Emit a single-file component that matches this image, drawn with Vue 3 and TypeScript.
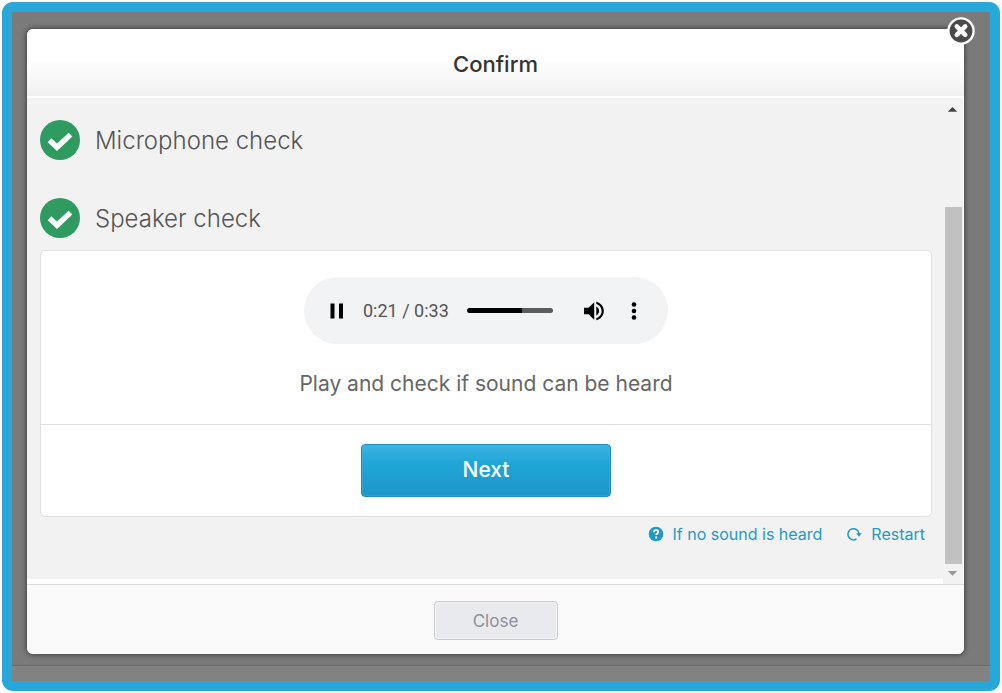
<script setup lang="ts">
import { computed, ref } from 'vue'

interface Check {
  id: string
  label: string
}

const checks: Check[] = [
  { id: 'microphone', label: 'Microphone check' },
  { id: 'speaker', label: 'Speaker check' },
]

const duration = 33
const elapsed = ref<number>(21)

const format = (seconds: number): string =>
  `${Math.floor(seconds / 60)}:${String(seconds % 60).padStart(2, '0')}`

const timeText = computed(() => `${format(elapsed.value)} / ${format(duration)}`)
const played = computed(() => `${(elapsed.value / duration) * 100}%`)
</script>

<template>
  <div class="frame">
    <section class="modal" role="dialog" aria-labelledby="dialog-title">
      <button class="dismiss" type="button" aria-label="Dismiss">
        <svg viewBox="0 0 28 28" aria-hidden="true">
          <circle cx="14" cy="14" r="12.6" fill="#4a4a4a" stroke="#fff" stroke-width="2.4" />
          <path d="M9.800 9.400 18.200 17.800M18.200 9.400 9.800 17.800" stroke="#fff" stroke-width="4.600" stroke-linecap="round" />
        </svg>
      </button>

      <header class="header">
        <h1 id="dialog-title">Confirm</h1>
      </header>

      <div class="body">
        <div class="content">
          <h2 v-for="check in checks" :key="check.id" class="check">
            <svg viewBox="0 0 40 40" aria-hidden="true">
              <circle cx="20" cy="20" r="20" fill="#2f9b60" />
              <path d="M9.500 20.200 17 27.200 30.500 14.600" fill="none" stroke="#fff" stroke-width="5.400" />
            </svg>
            <span>{{ check.label }}</span>
          </h2>

          <div class="card">
            <div class="listen">
              <div class="player">
                <button class="control" type="button" aria-label="Pause">
                  <svg viewBox="0 0 24 24" aria-hidden="true">
                    <path d="M5.5 4.5h4v15h-4zM14 4.5h4v15h-4z" />
                  </svg>
                </button>
                <span class="time">{{ timeText }}</span>
                <input
                  v-model.number="elapsed"
                  class="seek"
                  type="range"
                  min="0"
                  :max="duration"
                  aria-label="Playback position"
                  :style="{ '--played': played }"
                />
                <button class="control" type="button" aria-label="Mute">
                  <svg viewBox="0 0 24 24" aria-hidden="true">
                    <path
                      d="M2 8.7v6.6h4.5l5.7 5.5V3.2L6.5 8.7zM17.1 12c0-1.900-1.100-3.600-2.800-4.400v8.800c1.700-.8 2.800-2.500 2.800-4.400zM14.300 2.700v2.200c3.100.9 5.300 3.700 5.300 7.100s-2.200 6.200-5.300 7.100v2.200c4.300-1 7.500-4.700 7.500-9.300s-3.200-8.300-7.500-9.300z"
                    />
                  </svg>
                </button>
                <button class="control" type="button" aria-label="More options">
                  <svg viewBox="0 0 24 24" aria-hidden="true">
                    <circle cx="12" cy="5.500" r="2.300" />
                    <circle cx="12" cy="12" r="2.300" />
                    <circle cx="12" cy="18.500" r="2.300" />
                  </svg>
                </button>
              </div>
              <p class="hint">Play and check if sound can be heard</p>
            </div>
            <div class="actions">
              <button class="next" type="button">Next</button>
            </div>
          </div>

          <nav class="links">
            <a href="#help">
              <svg viewBox="0 0 16 16" aria-hidden="true">
                <circle cx="8" cy="8" r="7.300" fill="#1f9ac7" />
                <path
                  d="M5.900 6.300c0-1.500 1-2.200 2.200-2.200s2.200.7 2.200 1.900c0 1.500-2.100 1.500-2.100 3.100M8.200 10.500v1.900"
                  fill="none"
                  stroke="#fff"
                  stroke-width="1.800"
                />
              </svg>
              <span>If no sound is heard</span>
            </a>
            <a href="#restart">
              <svg viewBox="0 0 16 16" aria-hidden="true">
                <path d="M10.500 13A5.600 5.600 0 1 1 13.100 8" fill="none" stroke="#1f9ac7" stroke-width="1.500" />
                <path d="M10.200 7.300h5.600L13 10.800z" fill="#1f9ac7" />
              </svg>
              <span>Restart</span>
            </a>
          </nav>
        </div>

        <div class="scrollbar" aria-hidden="true">
          <svg class="arrow" viewBox="0 0 18 18"><path d="M4 12 9 7l5 5z" fill="#444" /></svg>
          <div class="track"><div class="thumb"></div></div>
          <svg class="arrow" viewBox="0 0 18 18"><path d="M4 7h10l-5 5z" fill="#999" /></svg>
        </div>
      </div>

      <footer class="footer">
        <button class="close" type="button">Close</button>
      </footer>
    </section>
    <div class="base"></div>
  </div>
</template>

<style>
html,
body {
  margin: 0;
  background: #fff;
}
</style>

<style scoped>
* {
  box-sizing: border-box;
}

.frame {
  display: flex;
  flex-direction: column;
  min-height: calc(100vh - 4px);
  margin: 2px;
  border: 10px solid #27a8d8;
  border-radius: 11px;
  background: #7a7a7a;
  font-family: Inter, "Liberation Sans", sans-serif;
  color: #555;
}

.modal {
  position: relative;
  display: flex;
  flex: 1;
  flex-direction: column;
  margin: 17px 26px 11px 15px;
  border-radius: 6px;
  background: #fff;
  box-shadow: 0 0 5px 1px #444;
}

.base {
  height: 16px;
  border-top: 1px solid #6c6c6c;
  background: #828282;
}

button {
  padding: 0;
  border: 0;
  background: none;
  font-family: inherit;
  cursor: pointer;
}

.dismiss {
  position: absolute;
  top: -12px;
  right: -11px;
  width: 28px;
  height: 28px;
}

svg {
  display: block;
  flex: none;
}

.header {
  display: flex;
  align-items: center;
  justify-content: center;
  height: 69px;
  border-bottom: 2px solid #fff;
  border-radius: 6px 6px 0 0;
  background: linear-gradient(#fff 45%, #f0f0f0);
}

h1 {
  margin: 3px 0 0;
  font-size: 22px;
  font-weight: 500;
  line-height: 28px;
  color: #333;
}

.body {
  display: flex;
  flex: 1;
}

.content {
  flex: 1;
  padding: 22px 12px 20px 13px;
  border-bottom: 5px solid #fff;
  background: #f2f2f2;
}

.check {
  display: flex;
  align-items: center;
  gap: 15px;
  height: 40px;
  margin: 0 0 38px;
  font-size: 24px;
  font-weight: 300;
}

.check svg {
  width: 40px;
  height: 40px;
}

.card {
  margin-top: -26px;
  border: 1px solid #e0e0e0;
  border-radius: 5px;
  background: #fff;
}

.listen {
  display: flex;
  flex-direction: column;
  align-items: center;
  padding: 26px 0;
  border-bottom: 1px solid #e0e0e0;
}

.player {
  display: flex;
  align-items: center;
  width: 364px;
  height: 67px;
  padding: 0 22px 0 21px;
  border-radius: 34px;
  background: #f1f3f4;
}

.control {
  width: 24px;
  height: 24px;
}

.control + .control {
  margin-left: 16px;
}

.time {
  margin: 0 18px 0 14px;
  font-family: Roboto, sans-serif;
  font-size: 18px;
  line-height: 24px;
}

.seek {
  flex: 1;
  min-width: 0;
  height: 5px;
  margin: 0 29px 0 0;
  appearance: none;
  border-radius: 3px;
  background: linear-gradient(to right, #000 var(--played), #5c5c5c var(--played));
}

.seek::-webkit-slider-thumb {
  width: 1px;
  height: 5px;
  appearance: none;
  background: transparent;
}

.hint {
  margin: 26px 0 0;
  font-size: 21px;
  font-weight: 400;
  line-height: 28px;
  color: #666;
}

.actions {
  display: flex;
  justify-content: center;
  padding: 19px 0;
}

.next {
  width: 250px;
  height: 53px;
  padding-bottom: 2px;
  border: 1px solid #1b8fbc;
  border-radius: 4px;
  background: linear-gradient(#3db4e2, #20a6d8 35%, #1d96c9);
  box-shadow: inset 0 0 0 1px #45b5df66;
  font-size: 21px;
  font-weight: 500;
  color: #fff;
}

.links {
  display: flex;
  justify-content: flex-end;
  gap: 24px;
  margin: 6px 7px 0 0;
}

.links a {
  display: flex;
  align-items: center;
  gap: 9px;
  font-size: 16px;
  line-height: 22px;
  color: #1f9ac7;
  text-decoration: none;
}

.links svg {
  width: 16px;
  height: 16px;
}

.scrollbar {
  display: flex;
  flex-direction: column;
  width: 20px;
  margin-right: 1px;
  padding: 2px 1px;
  background: #f2f2f2;
}

.content {
  margin-right: -1px;
}

.arrow {
  width: 17px;
  height: 18px;
}

.track {
  display: flex;
  flex: 1;
  flex-direction: column;
  justify-content: flex-end;
}

.thumb {
  height: 80%;
  margin: 0 0 0 1px;
  background: #c1c1c1;
}

.footer {
  display: flex;
  align-items: center;
  justify-content: center;
  height: 70px;
  border-top: 1px solid #ddd;
  border-radius: 0 0 6px 6px;
  background: #f9f9f9;
}

.close {
  width: 124px;
  height: 39px;
  margin-top: 2px;
  border: 1px solid #c9c9cd;
  border-radius: 4px;
  background: #e9eaed;
  box-shadow: inset 0 0 0 1px #f6f6f8;
  font-size: 17px;
  color: #8e8f9c;
}
</style>
